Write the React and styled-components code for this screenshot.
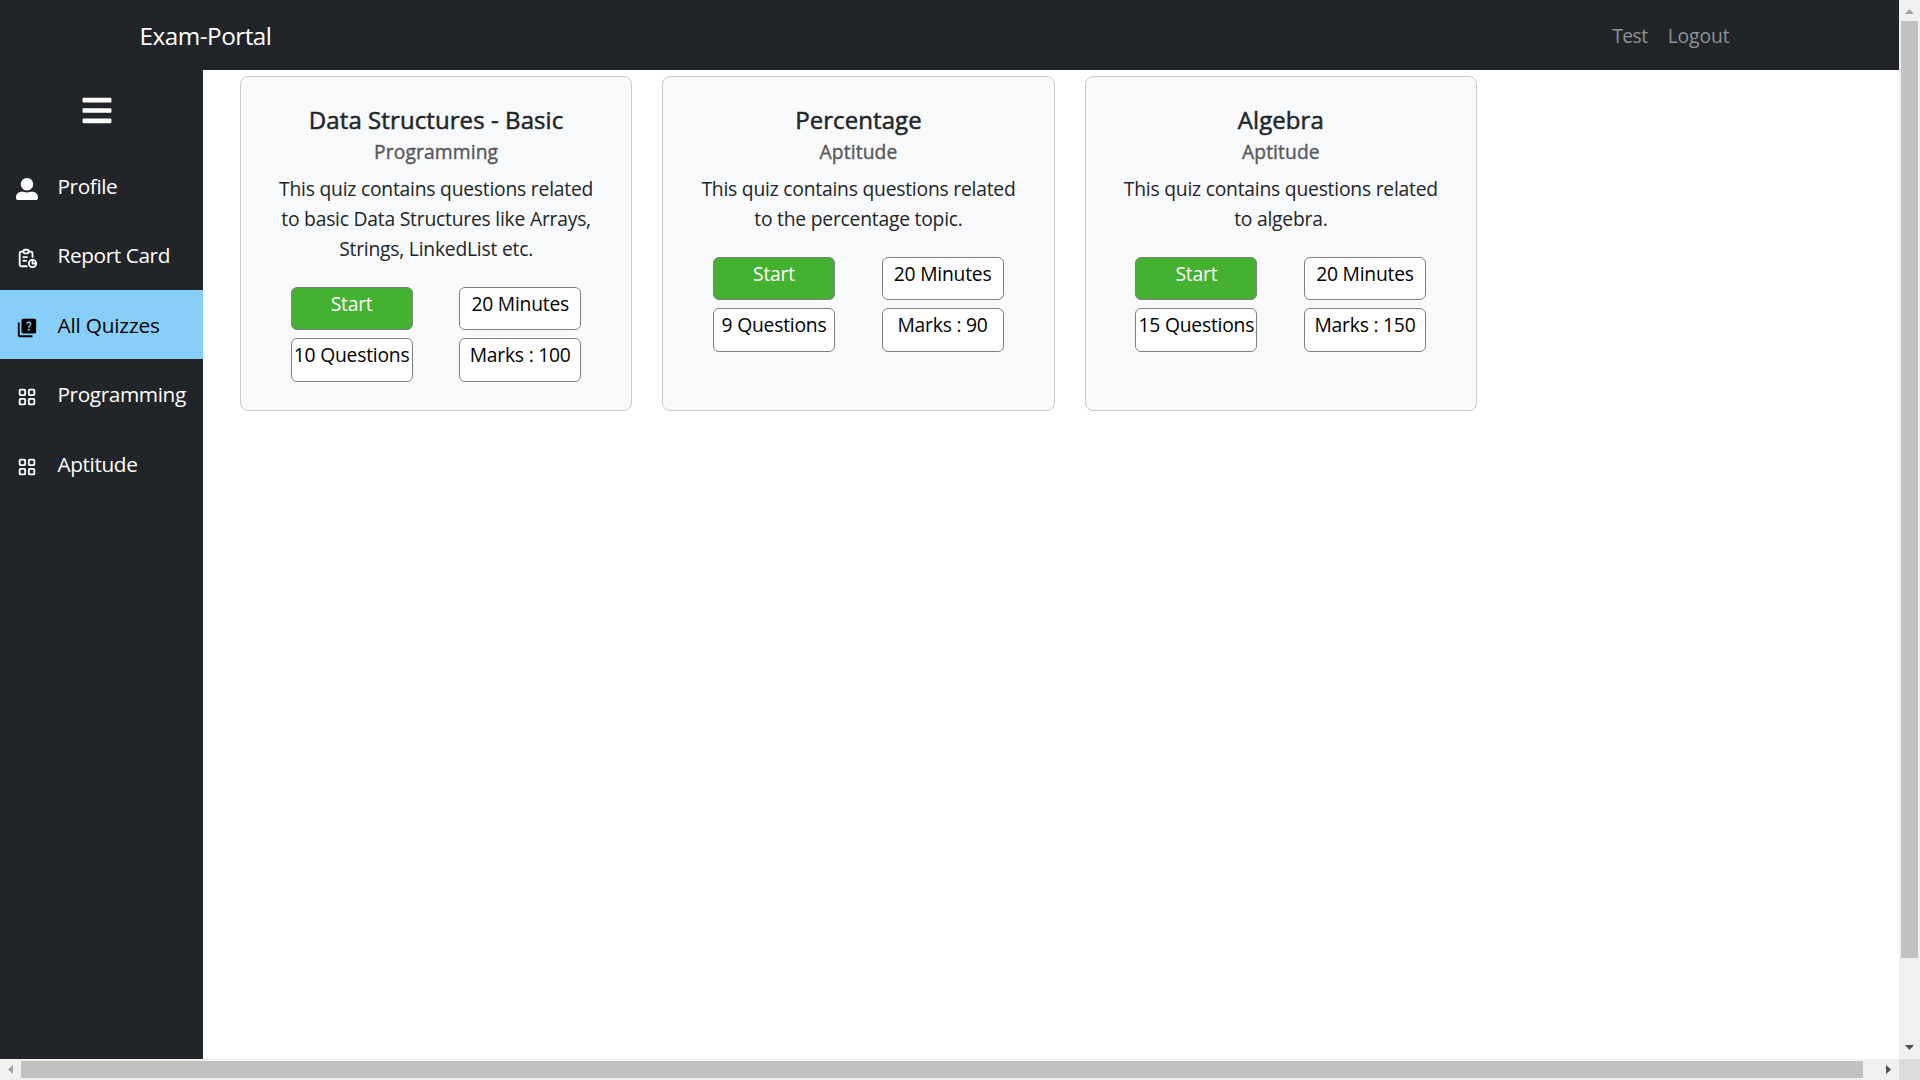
import React from "react";
import styled, { createGlobalStyle } from "styled-components";
import { FaBars, FaUserAlt } from "react-icons/fa";
import { TbReport, TbLayoutGrid } from "react-icons/tb";
import { MdQuiz } from "react-icons/md";

const GlobalStyle = createGlobalStyle`
  *, *::before, *::after { box-sizing: border-box; }
  body {
    margin: 0;
    overflow: hidden;
    background: #fff;
    color: #212529;
    font-family: "Segoe UI", "Open Sans", "Noto Sans", sans-serif;
    font-size: 19px;
    line-height: 30px;
  }
`;

const Window = styled.div`
  display: grid;
  grid-template-columns: 1899px 21px;
  grid-template-rows: 1059px 21px;
  width: 1920px;
  height: 1080px;
`;

const Page = styled.div`
  display: flex;
  flex-direction: column;
  overflow: hidden;
`;

const Header = styled.header`
  flex: 0 0 70px;
  display: flex;
  align-items: center;
  justify-content: space-between;
  padding: 2px 169.5px 0 139.5px;
  background: #212529;
`;

const Label = styled.span`
  display: block;
  white-space: nowrap;
  font-size: ${(p) => p.$size || 19.3}px;
  letter-spacing: ${(p) => p.$track ?? -0.22}px;
  -webkit-text-stroke: ${(p) => p.$stroke || 0}px currentColor;
`;

const Brand = styled.a`
  color: #fff;
`;

const Nav = styled.nav`
  display: flex;
  gap: 20px;
  color: #909294;
`;

const Main = styled.div`
  flex: 1;
  display: flex;
  min-height: 0;
`;

const Sidebar = styled.aside`
  width: 203px;
  background: #212529;
  color: #fff;
`;

const Toggle = styled.div`
  height: 82px;
  padding: 24px 0 0 81px;
  line-height: 0;
`;

const BarsIcon = styled(FaBars)`
  width: 32px;
  height: 33px;
`;

const MenuItem = styled.a`
  display: flex;
  align-items: center;
  height: ${(p) => p.$height}px;
  padding-bottom: ${(p) => (p.$raised ? 2 : 0)}px;
  background: ${(p) => (p.$active ? "#87cefa" : "transparent")};
  color: ${(p) => (p.$active ? "#000" : "#fff")};
`;

const MenuIcon = styled.span`
  display: flex;
  justify-content: center;
  width: 54px;
  margin-right: 3.5px;
  padding-top: ${(p) => p.$drop}px;
`;

const Quizzes = styled.main`
  display: flex;
  align-items: flex-start;
  gap: 30px;
  padding: 6px 0 0 36.9px;
`;

const Card = styled.article`
  width: 392.4px;
  height: 335px;
  padding: 28px 24px 0;
  border: 1px solid #c9cbce;
  border-radius: 8px;
  background: #f8f9fa;
  text-align: center;
`;

const Title = styled.h2`
  margin: 0;
  height: 30px;
  font-weight: 400;
  line-height: 30px;
`;

const Category = styled.h3`
  margin: 0 0 10px;
  height: 29px;
  font-weight: 400;
  line-height: 33px;
  color: #58595b;
`;

const Description = styled.p`
  margin: 0 0 23px;
`;

const Facts = styled.div`
  display: grid;
  grid-template-columns: 122px 122px;
  grid-template-rows: 43px 44px;
  gap: 8px 46.6px;
  justify-content: center;
  margin-left: -0.4px;
`;

const Fact = styled.div`
  display: flex;
  justify-content: center;
  padding-top: 1px;
  border: 1px solid gray;
  border-radius: 6px;
  background: ${(p) => (p.$primary ? "#44b131" : "#fff")};
  color: ${(p) => (p.$primary ? "#fff" : "#000")};
`;

const ScrollTrack = styled.div`
  display: flex;
  flex-direction: ${(p) => (p.$vertical ? "column" : "row")};
  align-items: center;
  background: #f0f0f0;
`;

const ScrollThumb = styled.div`
  width: ${(p) => p.$width}px;
  height: ${(p) => p.$height}px;
  background: #c1c1c1;
`;

const ArrowBox = styled.div`
  display: flex;
  align-items: center;
  justify-content: center;
  width: 21px;
  height: 21px;
  margin: ${(p) => p.$margin || 0};
`;

const Corner = styled.div`
  background: #dcdcdc;
`;

const arrows = {
  up: "M6 14h9l-4.5 -5z",
  down: "M6 7h9l-4.5 5z",
  left: "M13 6v9l-5 -4.5z",
  right: "M8 6v9l5 -4.5z",
};

function Arrow({ dir, color, margin }) {
  return (
    <ArrowBox $margin={margin}>
      <svg width="21" height="21" viewBox="0 0 21 21">
        <path d={arrows[dir]} fill={color} />
      </svg>
    </ArrowBox>
  );
}

const menu = [
  { text: "Profile", Icon: FaUserAlt, drop: 6, height: 69, raised: true },
  { text: "Report Card", Icon: TbReport, drop: 7, height: 69, raised: true },
  { text: "All Quizzes", Icon: MdQuiz, drop: 7, height: 69, active: true },
  { text: "Programming", Icon: TbLayoutGrid, drop: 5, height: 70 },
  { text: "Aptitude", Icon: TbLayoutGrid, drop: 5, height: 70 },
];

const quizzes = [
  {
    title: "Data Structures - Basic",
    category: "Programming",
    lines: ["This quiz contains questions related", "to basic Data Structures like Arrays,", "Strings, LinkedList etc."],
    questions: 10,
    marks: 100,
  },
  {
    title: "Percentage",
    category: "Aptitude",
    lines: ["This quiz contains questions related", "to the percentage topic."],
    questions: 9,
    marks: 90,
  },
  {
    title: "Algebra",
    category: "Aptitude",
    lines: ["This quiz contains questions related", "to algebra."],
    questions: 15,
    marks: 150,
  },
];

export default function App() {
  return (
    <Window>
      <GlobalStyle />
      <Page>
        <Header>
          <Brand><Label $size={24.3} $track={-0.5}>Exam-Portal</Label></Brand>
          <Nav>
            <Label $track={-0.5}>Test</Label>
            <Label $track={-0.1}>Logout</Label>
          </Nav>
        </Header>
        <Main>
          <Sidebar>
            <Toggle><BarsIcon /></Toggle>
            {menu.map(({ text, Icon, drop, height, raised, active }) => (
              <MenuItem key={text} $active={active} $height={height} $raised={raised}>
                <MenuIcon $drop={drop}><Icon size={22} /></MenuIcon>
                <Label $size={20.8} $track={active ? -0.2 : -0.4}>{text}</Label>
              </MenuItem>
            ))}
          </Sidebar>
          <Quizzes>
            {quizzes.map((q) => (
              <Card key={q.title}>
                <Title><Label $size={24} $track={0.08} $stroke={0.5}>{q.title}</Label></Title>
                <Category><Label $track={0.1} $stroke={0.4}>{q.category}</Label></Category>
                <Description>
                  {q.lines.map((line) => (
                    <Label key={line}>{line}</Label>
                  ))}
                </Description>
                <Facts>
                  <Fact $primary><Label>Start</Label></Fact>
                  <Fact><Label>20 Minutes</Label></Fact>
                  <Fact><Label>{q.questions} Questions</Label></Fact>
                  <Fact><Label>Marks : {q.marks}</Label></Fact>
                </Facts>
              </Card>
            ))}
          </Quizzes>
        </Main>
      </Page>
      <ScrollTrack $vertical>
        <Arrow dir="up" color="#a3a3a3" />
        <ScrollThumb $width={17} $height={937} />
        <Arrow dir="down" color="#505050" margin="auto 0 0" />
      </ScrollTrack>
      <ScrollTrack>
        <Arrow dir="left" color="#a3a3a3" />
        <ScrollThumb $width={1842} $height={17} />
        <Arrow dir="right" color="#505050" margin="0 0 0 auto" />
      </ScrollTrack>
      <Corner />
    </Window>
  );
}
